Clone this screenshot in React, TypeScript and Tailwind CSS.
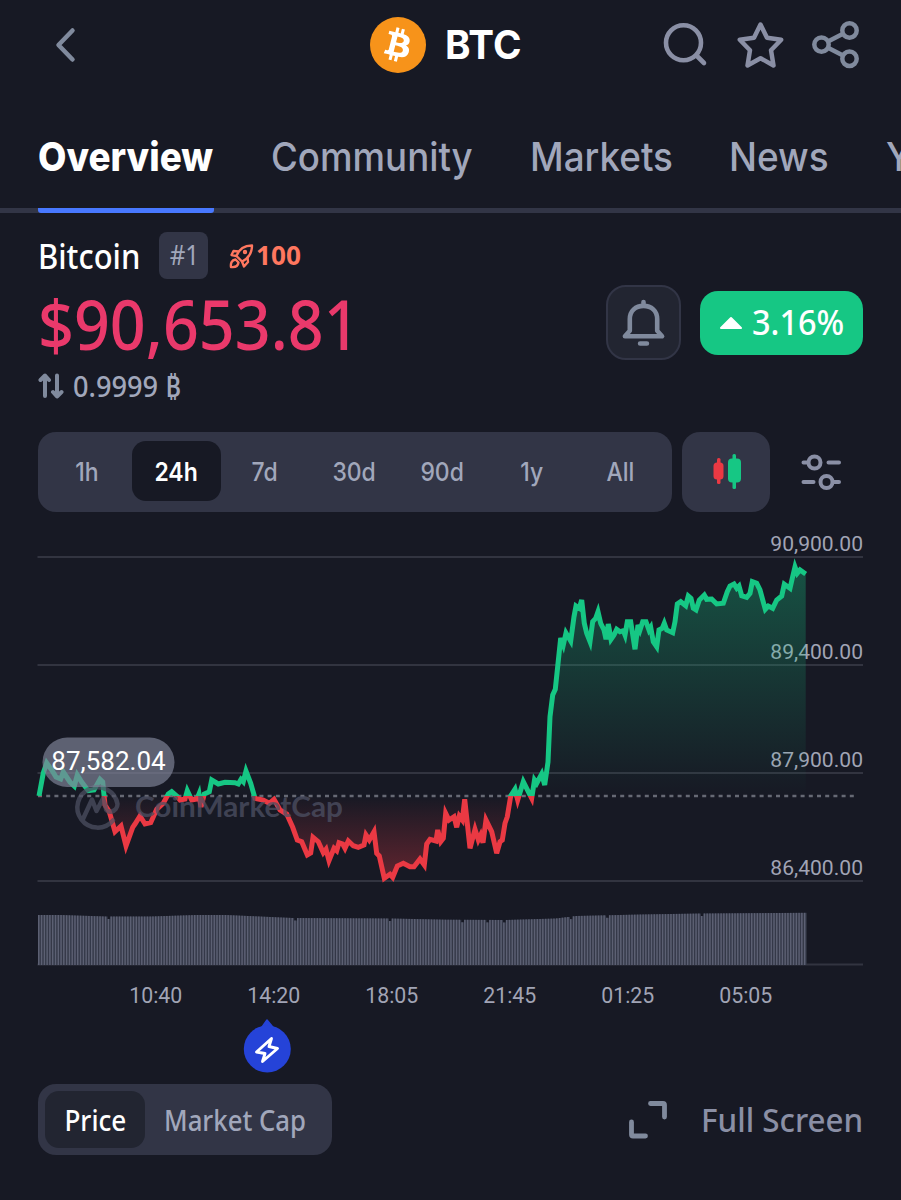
import { useState } from "react";
import { FaBitcoin } from "react-icons/fa";

const tabs = [
  { label: "Community", box: "w-[259px]", fit: "scale-x-[0.916]" },
  { label: "Markets", box: "w-[199px]", fit: "scale-x-[0.922]" },
  { label: "News", box: "w-[157px]", fit: "scale-x-[0.925]" },
  { label: "You", box: "w-[100px]", fit: "scale-x-[0.92]" },
];

const ranges = ["1h", "24h", "7d", "30d", "90d", "1y", "All"];

const gridRows = [
  { y: 557, label: "90,900.00" },
  { y: 665, label: "89,400.00" },
  { y: 773, label: "87,900.00" },
  { y: 881, label: "86,400.00" },
];

const times = ["10:40", "14:20", "18:05", "21:45", "01:25", "05:05"];

const BASELINE = 796;

const pricePoints =
  "39,796 43.3,773 46.7,763 51.7,770 56,777 60.7,779 63.3,772 70,782 74.3,786 77.3,775 81.7,782 88.3,790.7 94,790 100,779.3 102.7,782 105,805 109.3,811.7 115,831.7 121,826 126,846 132.7,827.3 135,824 140,816 145,824 150.7,822.7 156.7,809.3 163.3,803.3 168.3,794 171.7,791.7 176.7,796 180,800 185,799 187.3,790.7 191.7,800 197,799 199,794 201,807 204.3,794 209.3,791.7 211.7,780 218.3,784 225,782.3 235,782.7 238.3,784 241,779.3 243.3,781.7 246,771 250.7,783.3 255,798.3 263.3,800 269.3,803.3 274,799.3 280,810 286.7,814 292.7,827.3 297.3,840 301.7,841.7 307.3,855 310.7,853 313,837.3 318.3,841.7 323.3,852.7 326,849.3 329,860.7 334,848.3 336.7,850.7 339,842.7 342.7,844 345,848.3 348.3,841 353.3,845.7 358.3,847.3 364,845 366,835 369.3,840 374,831.7 376.7,853.3 379.3,856 384.3,878.3 390,874.3 392.7,877.3 397.3,866 403.3,863.3 410,866.7 414,866.7 420,859 424.3,865 426.7,844 430,839.3 436,841 437.7,830 440.7,841.7 443.3,838.3 445.7,813.3 449,820 454,816.7 456.7,827.3 459.3,816 462.3,820 464.7,799.3 470,848.3 475,829.3 478.3,840 480.7,835 483,842.7 486,820 491.7,831.7 496.7,853.3 500,841.7 502.3,840 505,823.3 507.3,816.7 510.7,796 515,789.3 517.7,800 523.3,781.7 528.3,791.7 531.7,798.3 534.5,780 536.7,783.3 541.7,774 544.7,785 548,762 550,716.7 552.7,695 555.3,689.3 560.7,638 563.3,645 566,633 570.7,641 574,616.7 576,606 579.3,608.3 581.7,600 584.3,623.3 586.7,633.3 590,641.7 592.7,621.7 595.7,618.3 598,611.7 600.7,623.3 604,630 606,639.3 608.3,624 611,639.3 614,635 616.7,629.3 620,631.7 623.3,630.7 625,635 627.3,621.7 630.7,621.7 635,649.3 638,625 640,630 642.7,621.7 646,621.7 649,630 650.7,627.3 653.3,641.7 656.7,646.7 659,630 662.3,628.3 664.3,623.3 666.7,630 672.7,632.7 675,621.7 677.3,604 680.7,601.7 685.7,605.7 688.3,596 691,598.3 693.3,608.3 696,610 699.3,600 704.3,595 706.7,599.3 711.7,599 716.7,604 723.3,603.3 727.3,591.7 730,586 734,584 736.7,588.3 739,586 741.7,595.7 746.7,597.3 750,593.3 752.3,581.7 756.7,583.3 760,590 765.3,609.3 768.3,606 772.7,608.3 776.7,600 781.7,596 784.3,584.3 790,588.3 792.3,578.3 795,567 797.3,573.3 800,570 805.7,574";

// [x, top] pairs the volume bars are interpolated between
const volumeShape = [
  [38, 915], [60, 915], [105, 916.5], [150, 916.5], [195, 915], [225, 915],
  [292, 918], [390, 918.5], [445, 919.7], [505, 920], [555, 918.5], [575, 916], [640, 914.5], [700, 913.5], [806, 912.8],
];
const volumeDips = [107, 294, 390, 461.5, 486, 502, 571, 606, 702];

function volumeTop(x: number) {
  const i = Math.max(1, volumeShape.findIndex((p) => p[0] >= x));
  const [x0, y0] = volumeShape[i - 1];
  const [x1, y1] = volumeShape[i];
  const dip = volumeDips.some((d) => Math.abs(d - x) < 1.4) ? 2.5 : 0;
  return y0 + ((y1 - y0) * (x - x0)) / (x1 - x0) + dip;
}

const volumeBars = Array.from({ length: 276 }, (_, i) => 38 + i * 2.785);

function PriceChart() {
  const area = `39,${BASELINE} ${pricePoints} 805.7,${BASELINE}`;
  return (
    <svg width="901" height="490" viewBox="0 528 901 490" className="block font-[Roboto,sans-serif]">
      <defs>
        <clipPath id="above"><rect x="0" y="528" width="901" height={BASELINE - 528} /></clipPath>
        <clipPath id="below"><rect x="0" y={BASELINE} width="901" height="200" /></clipPath>
        <linearGradient id="gain" gradientUnits="userSpaceOnUse" x1="0" y1="565" x2="0" y2={BASELINE}>
          <stop offset="0" stopColor="#16c784" stopOpacity="0.33" />
          <stop offset="1" stopColor="#16c784" stopOpacity="0" />
        </linearGradient>
        <linearGradient id="loss" gradientUnits="userSpaceOnUse" x1="0" y1={BASELINE} x2="0" y2="880">
          <stop offset="0" stopColor="#ea3943" stopOpacity="0" />
          <stop offset="1" stopColor="#ea3943" stopOpacity="0.36" />
        </linearGradient>
      </defs>

      {gridRows.map((row) => (
        <g key={row.y}>
          <line x1="37.5" x2="863" y1={row.y} y2={row.y} stroke="#323440" strokeWidth="2.2" />
          <text x="863" y={row.y - 6.5} textAnchor="end" fontSize="21.1" fill="#a1a4b5">{row.label}</text>
        </g>
      ))}
      <line x1="38" x2="856" y1={BASELINE} y2={BASELINE} stroke="#666974" strokeWidth="2.3" strokeDasharray="4 4.2" />

      <polygon points={area} fill="url(#gain)" clipPath="url(#above)" />
      <polygon points={area} fill="url(#loss)" clipPath="url(#below)" />
      <polyline points={pricePoints} fill="none" stroke="#16c784" strokeWidth="5" clipPath="url(#above)" />
      <polyline points={pricePoints} fill="none" stroke="#ea3943" strokeWidth="5" clipPath="url(#below)" />

      {/* watermark */}
      <g opacity="0.72" stroke="#4d5063" fill="none" strokeWidth="4.5" strokeLinecap="round" strokeLinejoin="round">
        <path d="M113 820.500A20.200 20.200 0 1 1 117.500 804C117.500 812 106 815 105.500 807L103 798.500 96.500 811 92 799.500 83 819" />
      </g>
      <text x="135" y="816.500" fontSize="28.500" fontWeight="700" fill="#4d5063" opacity="0.75" textLength="208" lengthAdjust="spacingAndGlyphs" className="font-[Lato,sans-serif]">
        CoinMarketCap
      </text>

      <rect x="42.5" y="737.5" width="132" height="49.5" rx="24.7" fill="#7f8398" fillOpacity="0.68" />
      <text x="108.5" y="770" textAnchor="middle" fontSize="26" fill="#fff">87,582.04</text>

      {/* volume */}
      <line x1="37.5" x2="863" y1="964.5" y2="964.5" stroke="#323440" strokeWidth="2" />
      {volumeBars.map((x) => (
        <g key={x}>
          <rect x={x} y={volumeTop(x)} width="2.8" height={965 - volumeTop(x)} fill="#343848" />
          <rect x={x} y={volumeTop(x)} width="1.5" height={965 - volumeTop(x)} fill="#5c6073" />
        </g>
      ))}

      {times.map((t, i) => (
        <text key={t} x={155.8 + i * 118} y="1002.5" textAnchor="middle" fontSize="21.3" fill="#a1a4b5">{t}</text>
      ))}
    </svg>
  );
}

export default function App() {
  const [range, setRange] = useState("24h");

  return (
    <main className="flex h-[1200px] w-[901px] flex-col overflow-hidden bg-[#171924] font-['Noto_Sans',sans-serif] text-white">
      <header className="flex h-[90px] shrink-0 items-center pl-[54px] font-[Inter,sans-serif]">
        <svg width="24" height="40" viewBox="0 0 24 40" fill="none" stroke="#808a9d" strokeWidth="4.5" strokeLinecap="round" strokeLinejoin="round">
          <path d="M18.500 5.500 4.500 20l14 14.500" />
        </svg>
        <div className="ml-[292px] size-14 rounded-full bg-[radial-gradient(circle,#fff_60%,#f7931a_62%)]">
          <FaBitcoin className="size-14 text-[#f7931a]" />
        </div>
        <h1 className="ml-[19px] w-[142px] text-[40px] font-bold">
          <span className="inline-block origin-left scale-x-[0.965]">BTC</span>
        </h1>
        <div className="ml-[74px] flex items-center gap-[24px] text-[#8a8fa5]">
          <svg className="-ml-1" width="52" height="52" viewBox="0 0 52 52" fill="none" stroke="currentColor" strokeWidth="4.6" strokeLinecap="round">
            <circle cx="26.5" cy="23.7" r="17.5" />
            <path d="M39.500 36.500l7.500 7.500" />
          </svg>
          <svg width="52" height="52" viewBox="0 0 52 52" fill="none" stroke="currentColor" strokeWidth="4.5" strokeLinejoin="round">
            <path d="M27.500 5.500l6.500 13.200 14.200 2-10.200 10.500 2.500 15.300L27.500 39.200l-13 7.300 2.500-15.300L6.800 20.700l14.200-2z" />
          </svg>
          <svg width="52" height="52" viewBox="0 0 52 52" fill="none" stroke="#808a9d" strokeWidth="4.5">
            <circle cx="12.500" cy="25.600" r="7.200" />
            <circle cx="40.500" cy="11.500" r="7.200" />
            <circle cx="40.500" cy="39.800" r="7.200" />
            <path d="M19 22.400 34 14.800M19 28.800l15 7.600" />
          </svg>
        </div>
      </header>

      <nav className="flex h-[123px] shrink-0 border-b-[5px] border-[#323546] pl-[38px] font-[Inter,sans-serif] text-[40px] leading-[134px] whitespace-nowrap text-[#a1a7bb]">
        <div className="-mb-[5px] mr-[57px] h-[123px] w-[176px] shrink-0 rounded-b-[3px] border-b-[5px] border-[#4878ff] font-extrabold text-white">
          <span className="inline-block origin-left scale-x-[0.92]">Overview</span>
        </div>
        {tabs.map((tab) => (
          <div key={tab.label} className={`${tab.box} shrink-0 font-medium`}>
            <span className={`inline-block origin-left ${tab.fit}`}>{tab.label}</span>
          </div>
        ))}
      </nav>

      <section className="flex h-[219px] shrink-0 justify-between pr-[38px] pl-[38px]">
        <div className="w-[400px] pt-[19px]">
          <div className="flex h-[47px] items-center">
            <div className="w-[121px] pt-0.5 text-[34px] font-medium">
              <span className="inline-block origin-left scale-x-[0.91]">Bitcoin</span>
            </div>
            <div className="flex h-[47px] w-[49px] items-center justify-center rounded-lg bg-[#323546] pl-0.5 text-[27px] text-[#a1a7bb]">
              <span className="inline-block scale-x-[0.9]">#1</span>
            </div>
            <svg className="ml-[21px]" width="25" height="26" viewBox="0 0 25 26" fill="none" stroke="#ff775f" strokeWidth="2.4" strokeLinejoin="round">
              <path d="M7.500 13C10 6 15 2.500 23 2.500c0 7.500-3 12.500-10 16z" />
              <path d="M9.500 8.500 4.500 8 2.500 12l5 1M18.500 14l.5 5-4 4.500-2-5" />
              <path d="M6.500 16.500c-4 .5-5 4-4.500 7.500 4 .5 7-1 7.500-4.500z" />
              <circle cx="16" cy="9" r="1" />
            </svg>
            <span className="ml-[2px] origin-left scale-x-[0.97] text-[27px] font-bold text-[#ff775f]">100</span>
          </div>
          <div className="h-[88px] text-[69px] leading-[88px] font-medium text-[#ea396b]">
            <span className="inline-block origin-left scale-x-[0.91]">$90,653.81</span>
          </div>
          <div className="mt-1 flex h-[30px] items-center text-[28px] leading-[30px] font-medium text-[#a1a7bb]">
            <svg width="26" height="26" viewBox="0 0 26 26" fill="none" stroke="#808a9d" strokeWidth="4" strokeLinecap="round" strokeLinejoin="round">
              <path d="M7 23V4M2.500 7 7 2.500 11 7M19 2.500V22M15 19l4 4.500L23.500 19" />
            </svg>
            <span className="ml-[9px] origin-left scale-x-[0.97]">0.9999 ₿</span>
          </div>
        </div>

        <div className="mt-[72px] flex h-[75px] items-center gap-[19px]">
          <button className="flex size-[75px] items-center justify-center rounded-[20px] border-2 border-[#323546] bg-[#222531]">
            <svg width="45" height="50" viewBox="0 0 46 50" fill="none" stroke="#808a9d" strokeWidth="4.7" strokeLinecap="round" strokeLinejoin="round">
              <path d="M23 3.500V7M9 33V21C9 12.500 15 7.500 23 7.500S37 12.500 37 21v12l5 5.500H4zM19.500 46h7" />
            </svg>
          </button>
          <div className="flex h-[64px] w-[163px] items-center rounded-[18px] bg-[#16c784] pl-[19px]">
            <svg width="24" height="14" viewBox="0 0 24 14" fill="#fff" stroke="#fff" strokeWidth="2" strokeLinejoin="round">
              <path d="M12 2 22 12H2z" />
            </svg>
            <span className="ml-[9px] inline-block origin-left scale-x-[0.955] text-[34px] font-medium">3.16%</span>
          </div>
        </div>
      </section>

      <section className="flex h-20 shrink-0 pl-[38px]">
        <div className="flex w-[634px] items-center rounded-[18px] bg-[#323546] pb-[2px] pl-[5px] font-[Inter,sans-serif] text-[25.5px] font-medium text-[#a1a7bb]">
          {ranges.map((r) => (
            <button
              key={r}
              onClick={() => setRange(r)}
              className={`h-[60px] w-[88.8px] rounded-[14px] pt-0.5 ${r === range ? "bg-[#171924] font-semibold text-white" : ""}`}
            >
              <span className="inline-block scale-x-[0.9]">{r}</span>
            </button>
          ))}
        </div>
        <button className="ml-[10px] flex w-[88px] items-center justify-center rounded-[18px] bg-[#323546] pb-0.5 pl-0.5">
          <svg width="30" height="38" viewBox="0 0 30 38">
            <rect x="5" y="6" width="3.5" height="26" rx="1.5" fill="#ea3943" />
            <rect x="1.500" y="10.500" width="10" height="17" rx="3.5" fill="#ea3943" />
            <rect x="20.500" y="2" width="3.5" height="35" rx="1.5" fill="#16c784" />
            <rect x="16" y="6.500" width="13" height="24" rx="4" fill="#16c784" />
          </svg>
        </button>
        <button className="ml-[30px] flex items-center">
          <svg width="42" height="40" viewBox="0 0 42 40" fill="none" stroke="#8a8fa5" strokeWidth="4" strokeLinecap="round">
            <circle cx="14.500" cy="10.500" r="6" />
            <circle cx="26.500" cy="30" r="6" />
            <path d="M3.500 10.500h4M28.500 10.500h10.500M3.500 30h10M33.500 30h5.500" />
          </svg>
        </button>
      </section>

      <section className="mt-4 h-[490px] shrink-0">
        <PriceChart />
      </section>

      <div className="h-[66px] shrink-0 pl-[243px]">
        <svg width="48" height="55" viewBox="0 0 48 55">
          <path d="M24 2 18 10.500h13z" fill="#2543d8" stroke="#2543d8" strokeWidth="1.5" strokeLinejoin="round" />
          <circle cx="24.300" cy="31" r="23.500" fill="#2543d8" />
          <path d="M28.500 20.500 13.500 34l8.500 1.500-2.500 8L34.500 30.500 26 28.500z" fill="none" stroke="#fff" strokeWidth="2.9" strokeLinejoin="round" />
        </svg>
      </div>

      <footer className="flex h-[71px] shrink-0 items-center pl-[38px]">
        <div className="flex h-[71px] w-[294px] items-center rounded-[18px] bg-[#323546] pl-[7px] text-[29px] font-medium text-[#a1a7bb]">
          <button className="h-[57px] w-[100px] rounded-[14px] bg-[#222531] text-white">
            <span className="inline-block scale-x-[0.9]">Price</span>
          </button>
          <span className="ml-[19px] inline-block w-[142px] origin-left scale-x-[0.888] whitespace-nowrap">Market Cap</span>
        </div>
        <svg className="-mt-0.5 ml-[296px]" width="40" height="40" viewBox="0 0 40 40" fill="none" stroke="#808a9d" strokeWidth="4.8" strokeLinecap="round" strokeLinejoin="round">
          <path d="M22.500 4.500H35q1.500 0 1.500 1.500v12M3.500 23v12.500q0 1.500 1.500 1.500h12.500" />
        </svg>
        <span className="ml-[33px] inline-block origin-left scale-x-[0.95] text-[33px] font-medium whitespace-nowrap text-[#8a8fa5]">Full Screen</span>
      </footer>
    </main>
  );
}
